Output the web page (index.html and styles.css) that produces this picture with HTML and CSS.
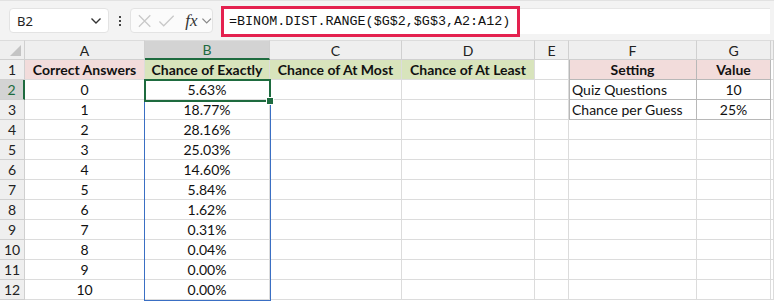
FILE: index.html
```html
<!DOCTYPE html>
<html lang="en">
<head>
    <meta charset="UTF-8">
    <title>Binomial Quiz Sheet</title>
    <link rel="stylesheet" href="styles.css">
</head>
<body>

    <div class="formula-bar">
        <div class="name-box">
            <span>B2</span>
            <svg width="12" height="8" viewBox="0 0 12 8"><path d="M1.5 1.5 L6 6 L10.5 1.5" fill="none" stroke="#333" stroke-width="1.4"/></svg>
        </div>
        <div class="dots"><i></i><i></i><i></i></div>
        <div class="fx-box">
            <svg width="16" height="16" viewBox="0 0 16 16"><path d="M2 2 L14 14 M14 2 L2 14" stroke="#c8c8c8" stroke-width="1.3"/></svg>
            <svg width="18" height="16" viewBox="0 0 18 16"><path d="M1.5 8.5 L6 13 L16.5 2.5" fill="none" stroke="#c8c8c8" stroke-width="1.3"/></svg>
            <span class="fx">fx</span>
            <svg width="12" height="8" viewBox="0 0 12 8"><path d="M1.5 1.5 L6 6 L10.5 1.5" fill="none" stroke="#888" stroke-width="1.3"/></svg>
        </div>
        <div class="formula-input">
            <span class="formula">=BINOM.DIST.RANGE($G$2,$G$3,A2:A12)</span>
        </div>
    </div>

    <div class="sheet">
        <!-- column headers -->
        <div class="hd corner"></div>
        <div class="hd">A</div>
        <div class="hd active-col">B</div>
        <div class="hd">C</div>
        <div class="hd">D</div>
        <div class="hd">E</div>
        <div class="hd">F</div>
        <div class="hd">G</div>
        <div class="hd"></div>

        <!-- row 1 -->
        <div class="rh">1</div>
        <div class="c b pink">Correct Answers</div>
        <div class="c b green">Chance of Exactly</div>
        <div class="c b green">Chance of At Most</div>
        <div class="c b green">Chance of At Least</div>
        <div class="c"></div>
        <div class="c b pink box first">Setting</div>
        <div class="c b pink box">Value</div>
        <div class="c"></div>

        <div class="rh active-row">2</div>
        <div class="c">0</div>
        <div class="c">5.63%</div>
        <div class="c"></div><div class="c"></div><div class="c"></div>
        <div class="c left box first">Quiz Questions</div>
        <div class="c box">10</div>
        <div class="c"></div>

        <div class="rh">3</div>
        <div class="c">1</div>
        <div class="c">18.77%</div>
        <div class="c"></div><div class="c"></div><div class="c"></div>
        <div class="c left box first">Chance per Guess</div>
        <div class="c box">25%</div>
        <div class="c"></div>

        <div class="rh">4</div><div class="c">2</div><div class="c">28.16%</div>
        <div class="c"></div><div class="c"></div><div class="c"></div><div class="c"></div><div class="c"></div><div class="c"></div>

        <div class="rh">5</div><div class="c">3</div><div class="c">25.03%</div>
        <div class="c"></div><div class="c"></div><div class="c"></div><div class="c"></div><div class="c"></div><div class="c"></div>

        <div class="rh">6</div><div class="c">4</div><div class="c">14.60%</div>
        <div class="c"></div><div class="c"></div><div class="c"></div><div class="c"></div><div class="c"></div><div class="c"></div>

        <div class="rh">7</div><div class="c">5</div><div class="c">5.84%</div>
        <div class="c"></div><div class="c"></div><div class="c"></div><div class="c"></div><div class="c"></div><div class="c"></div>

        <div class="rh">8</div><div class="c">6</div><div class="c">1.62%</div>
        <div class="c"></div><div class="c"></div><div class="c"></div><div class="c"></div><div class="c"></div><div class="c"></div>

        <div class="rh">9</div><div class="c">7</div><div class="c">0.31%</div>
        <div class="c"></div><div class="c"></div><div class="c"></div><div class="c"></div><div class="c"></div><div class="c"></div>

        <div class="rh">10</div><div class="c">8</div><div class="c">0.04%</div>
        <div class="c"></div><div class="c"></div><div class="c"></div><div class="c"></div><div class="c"></div><div class="c"></div>

        <div class="rh">11</div><div class="c">9</div><div class="c">0.00%</div>
        <div class="c"></div><div class="c"></div><div class="c"></div><div class="c"></div><div class="c"></div><div class="c"></div>

        <div class="rh">12</div><div class="c">10</div><div class="c">0.00%</div>
        <div class="c"></div><div class="c"></div><div class="c"></div><div class="c"></div><div class="c"></div><div class="c"></div>

        <!-- spill range and selected cell -->
        <div class="spill"></div>
        <div class="selected"><span class="handle"></span></div>
    </div>

</body>
</html>
```

FILE: styles.css
```css
body {
    margin: 0;
    width: 774px;
    height: 304px;
    overflow: hidden;
    background-color: #fff;
    font-family: 'Lato', 'Liberation Sans', sans-serif;
    color: #111;
}

/* formula bar */
.formula-bar {
    height: 40px;
    background-color: #f3f3f3;
    border-top: 1px solid #e2e2e2;
    box-sizing: border-box;
    display: flex;
    align-items: center;
    padding-left: 9px;
}

.name-box {
    width: 100px;
    height: 25px;
    box-sizing: border-box;
    background-color: #fff;
    border: 1px solid #e3e3e3;
    border-radius: 4px;
    display: flex;
    align-items: center;
    justify-content: space-between;
    padding: 0 6px 0 7px;
    font-family: 'Noto Sans', sans-serif;
    font-size: 13px;
    color: #222;
}

.dots {
    width: 21px;
    display: flex;
    flex-direction: column;
    align-items: center;
    gap: 2px;
}

.dots i {
    display: block;
    width: 2px;
    height: 2px;
    background-color: #444;
}

.fx-box {
    width: 83px;
    height: 25px;
    box-sizing: border-box;
    background-color: #fbfbfb;
    border: 1px solid #e3e3e3;
    border-radius: 4px;
    display: flex;
    align-items: center;
    gap: 6px;
    padding-left: 6px;
}

.fx {
    font-family: 'Liberation Serif', serif;
    font-style: italic;
    font-size: 17px;
    color: #333;
    margin-left: 4px;
    margin-right: -3px;
}

.formula-input {
    flex: 1;
    height: 25px;
    margin-left: 8px;
    margin-right: 4px;
    background-color: #fff;
    border-top: 1px solid #e6e6e6;
    display: flex;
    align-items: center;
}

.formula {
    display: inline-block;
    height: 31px;
    box-sizing: border-box;
    line-height: 25px;
    border: 3px solid #e4214f;
    padding: 0 7px 0 5px;
    font-family: 'Liberation Mono', monospace;
    font-size: 13.4px;
    color: #111;
}

/* grid */
.sheet {
    position: relative;
    display: grid;
    grid-template-columns: 25px 120px 125px 132px 133px 34px 128px 74px 1fr;
    grid-auto-rows: 20px;
    font-size: 14px;
}

.hd, .rh {
    background-color: #efefef;
    border-right: 1px solid #d0d0d0;
    border-bottom: 1px solid #d0d0d0;
    box-sizing: border-box;
    display: flex;
    align-items: center;
    justify-content: center;
    font-size: 14px;
    color: #222;
}

.hd {
    border-top: 1px solid #dcdcdc;
}

.corner {
    position: relative;
}

.corner::after {
    content: '';
    position: absolute;
    right: 3px;
    bottom: 3px;
    border-left: 11px solid transparent;
    border-bottom: 11px solid #c4c4c4;
}

.active-col {
    background-color: #d3d3d3;
    color: #1e6b3f;
    border-bottom: 2px solid #1e6b3f;
}

.active-row {
    background-color: #d3d3d3;
    color: #1e6b3f;
    border-right: 2px solid #1e6b3f;
}

.c {
    background-color: #fff;
    border-right: 1px solid #dcdcdc;
    border-bottom: 1px solid #dcdcdc;
    box-sizing: border-box;
    display: flex;
    align-items: center;
    justify-content: center;
    white-space: nowrap;
    overflow: hidden;
}

.b {
    font-weight: bold;
}

.pink {
    background-color: #f2dcdb;
}

.green {
    background-color: #d8e4bc;
}

.left {
    justify-content: flex-start;
    padding-left: 3px;
}

.box {
    border-right-color: #b8b8b8;
    border-bottom-color: #b8b8b8;
}

.first {
    box-shadow: inset 1px 0 0 #b8b8b8;
}

/* overlays */
.spill {
    position: absolute;
    left: 144px;
    top: 40px;
    width: 127px;
    height: 221px;
    box-sizing: border-box;
    border: 1px solid #3a6fc4;
}

.selected {
    position: absolute;
    left: 144px;
    top: 39px;
    width: 127px;
    height: 23px;
    box-sizing: border-box;
    border: 2px solid #1e6b3f;
}

.handle {
    position: absolute;
    right: -5px;
    bottom: -5px;
    width: 6px;
    height: 6px;
    background-color: #1e6b3f;
    border: 1px solid #fff;
}
```
